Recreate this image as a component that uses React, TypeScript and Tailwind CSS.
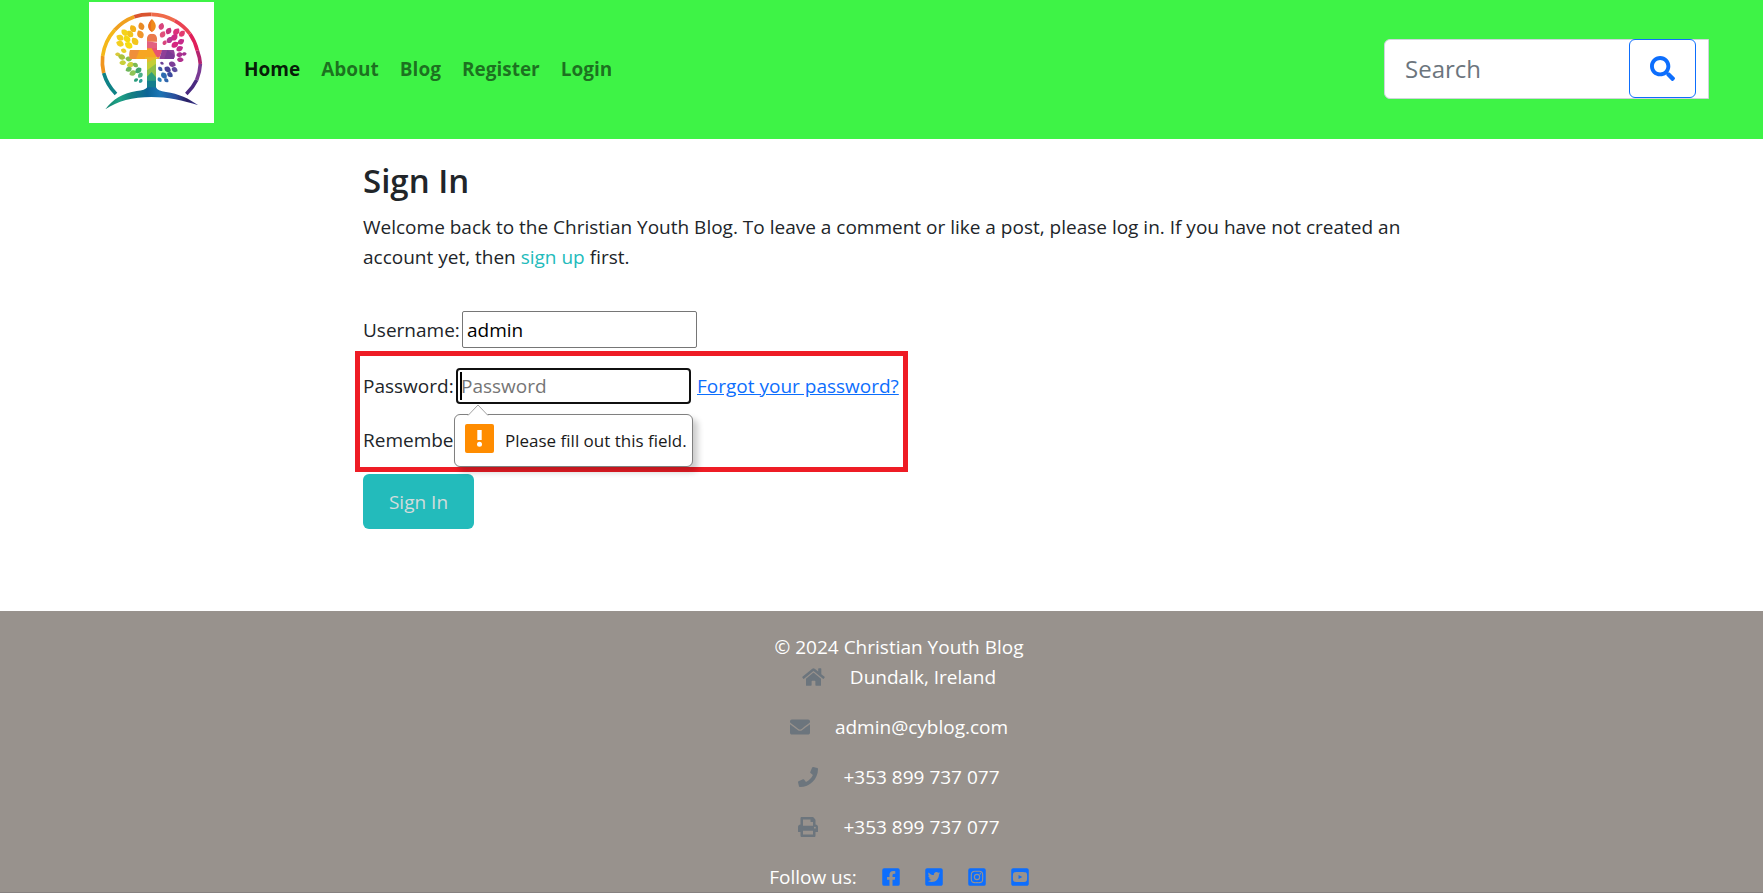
import {
  FaEnvelope,
  FaFacebookSquare,
  FaHome,
  FaInstagramSquare,
  FaPhone,
  FaPrint,
  FaSearch,
  FaTwitterSquare,
  FaYoutubeSquare,
} from "react-icons/fa";

type Leaf = [x: number, y: number, angle: number, size: number, color: string];

const leaves: Leaf[] = [
  [184, 79, -20, 12, "#e98a26"],
  [159, 86, -35, 12, "#f3b21b"],
  [181, 103, -30, 13, "#f0962a"],
  [150, 102, -45, 12, "#f2c51c"],
  [134, 98, -50, 12, "#f5d21a"],
  [120, 113, -60, 12, "#f3cf1e"],
  [141, 117, -50, 12, "#f6d90f"],
  [165, 124, -35, 13, "#f2c51c"],
  [120, 131, -70, 12, "#f4cf20"],
  [146, 136, -55, 13, "#f6dc12"],
  [131, 152, -65, 9, "#e9cf2a"],
  [113, 163, -85, 8, "#d9c93a"],
  [125, 171, -75, 11, "#a9c23f"],
  [128, 188, -95, 10, "#c9cf3a"],
  [146, 177, -80, 10, "#8bbf4d"],
  [151, 194, -110, 11, "#cdd23c"],
  [146, 208, -115, 10, "#6fb65a"],
  [166, 195, -60, 9, "#7dba50"],
  [158, 219, -120, 11, "#8fc455"],
  [175, 211, -130, 11, "#3fa56b"],
  [181, 226, -140, 9, "#4bb08a"],
  [168, 240, -120, 7, "#2a9d7c"],
  [182, 243, -140, 7, "#2f9e9a"],
  [244, 79, 20, 11, "#d8447c"],
  [266, 93, 30, 11, "#c9307c"],
  [248, 103, 30, 11, "#e0507a"],
  [289, 95, 40, 12, "#dd2f7a"],
  [306, 101, 45, 11, "#e23a6e"],
  [283, 112, 45, 12, "#cf2a86"],
  [269, 120, 40, 11, "#b93692"],
  [303, 125, 55, 11, "#c7298a"],
  [285, 134, 55, 12, "#d6247f"],
  [254, 128, 35, 8, "#d8447c"],
  [299, 146, 65, 11, "#c32a8c"],
  [313, 162, 85, 7, "#a32f8f"],
  [299, 164, 80, 10, "#a8308f"],
  [301, 179, 95, 10, "#b0308d"],
  [277, 193, 110, 11, "#7c3d97"],
  [284, 209, 120, 10, "#5d4a9d"],
  [263, 208, 125, 11, "#4b3f96"],
  [246, 190, 120, 6, "#6a3f95"],
  [241, 207, 135, 8, "#3e5aa6"],
  [270, 224, 130, 10, "#3b4a9e"],
  [252, 227, 140, 11, "#2d6bb0"],
  [239, 239, 145, 8, "#2a7fb8"],
  [259, 241, 130, 8, "#2f66ad"],
];

const arcs = [
  { d: "M108 282A147 147 0 0 1 71 219", color: "#0f8286" },
  { d: "M71 219A147 147 0 0 1 68 168", color: "#f0951f" },
  { d: "M68 168A147 147 0 0 1 104 90", color: "#f4b71a" },
  { d: "M104 90A147 147 0 0 1 163 50", color: "#f0a01f" },
  { d: "M163 50A147 147 0 0 1 214 43", color: "#d9532f" },
  { d: "M214 43A147 147 0 0 1 284 62", color: "#ef6a4a" },
  { d: "M284 62A147 147 0 0 1 330 102", color: "#ea4253" },
  { d: "M330 102A147 147 0 0 1 352 152", color: "#e01f5a" },
  { d: "M352 152A147 147 0 0 1 361 192", color: "#b3246f" },
  { d: "M361 192A147 147 0 0 1 350 240", color: "#7a3a94" },
  { d: "M350 240A147 147 0 0 1 319 282", color: "#4a2a80" },
];

function Logo() {
  return (
    <svg viewBox="27 6 375 363" className="block h-[121px] w-[125px]" role="img" aria-label="Christian Youth Blog logo">
      <defs>
        <linearGradient id="hill" x1="76" x2="355" y1="0" y2="0" gradientUnits="userSpaceOnUse">
          <stop offset="0" stopColor="#12806f" />
          <stop offset="0.15" stopColor="#1fa386" />
          <stop offset="0.28" stopColor="#147f80" />
          <stop offset="0.45" stopColor="#0c6496" />
          <stop offset="0.58" stopColor="#1b75b4" />
          <stop offset="0.75" stopColor="#2a4f9c" />
          <stop offset="0.88" stopColor="#2b1f63" />
          <stop offset="1" stopColor="#3c3f98" />
        </linearGradient>
        <clipPath id="cross">
          <path d="M201 280V177H150Q145 163 150 150H201V114Q203 101 216 101Q229 101 231 114V150H281Q288 163 281 177H228V280Z" />
        </clipPath>
      </defs>
      <path fill="#fff" d="M27 6h375v363H27z" />
      <g fill="none" strokeWidth="11">
        {arcs.map((arc) => (
          <path key={arc.d} d={arc.d} stroke={arc.color} />
        ))}
      </g>
      {leaves.map(([x, y, angle, size, color]) => (
        <path
          key={`${x}-${y}`}
          d="M0-1C.95-.5 1 .6 0 1C-1 .6-.95-.5 0-1Z"
          fill={color}
          transform={`translate(${x} ${y}) rotate(${angle}) scale(${size})`}
        />
      ))}
      <path d="M216 57C230 70 232 86 216 96C200 86 202 70 216 57Z" fill="#f08a1c" />
      <path d="M216 57C212 70 212 86 216 96C200 86 202 70 216 57Z" fill="#e9701f" />
      <g clipPath="url(#cross)">
        <path fill="#ea7a4c" d="M195 95h45v30h-45z" />
        <path fill="#e3607f" d="M195 122l45 8v30h-45z" />
        <path fill="#ef8f3a" d="M140 145h40v40h-40z" />
        <path fill="#f6a623" d="M180 145h35l20 20-20 20h-50z" />
        <path fill="#e8536f" d="M215 145h35l-15 35z" />
        <path fill="#8e3f98" d="M248 145h45v40h-58z" />
        <path fill="#7a3a94" d="M262 150l28 20v15h-40z" />
        <path fill="#e9b92a" d="M195 172h45l-20 20h-25z" />
        <path fill="#c4cf36" d="M195 190l35-15v45h-35z" />
        <path fill="#8dc04a" d="M195 215l35-25v50h-35z" />
        <path fill="#2f9e7c" d="M195 236l20-20 20 24v12h-40z" />
        <path fill="#147d8e" d="M195 242h40v40h-40z" />
      </g>
      <path
        fill="url(#hill)"
        d="M76 328C98 297 130 279 170 273Q196 271 202 262H228Q232 273 258 276C295 281 328 296 355 316C310 301 262 291 214 291C158 291 112 303 76 328Z"
      />
    </svg>
  );
}

const navLinks = ["Home", "About", "Blog", "Register", "Login"];

const contacts = [
  { Icon: FaHome, size: "h-5 w-[23px]", text: "Dundalk, Ireland" },
  { Icon: FaEnvelope, size: "size-5", text: "admin@cyblog.com" },
  { Icon: FaPhone, size: "size-5", text: "+353 899 737 077" },
  { Icon: FaPrint, size: "size-5", text: "+353 899 737 077" },
];

const socials = [
  { Icon: FaFacebookSquare, name: "Facebook" },
  { Icon: FaTwitterSquare, name: "Twitter" },
  { Icon: FaInstagramSquare, name: "Instagram" },
  { Icon: FaYoutubeSquare, name: "YouTube" },
];

function Header() {
  return (
    <header className="flex min-h-[139px] items-center bg-[#3ef346] pr-[54px] pb-px pl-[89px]">
      <a href="#home" className="mt-[2px] self-start">
        <Logo />
      </a>
      <nav className="ml-[30px] flex gap-[21px] font-bold">
        {navLinks.map((link) => (
          <a
            key={link}
            href={`#${link.toLowerCase()}`}
            className={link === "Home" ? "text-black/90" : "text-black/55"}
          >
            {link}
          </a>
        ))}
      </nav>
      <form
        role="search"
        className="ml-auto flex h-[60px] w-[325px] rounded-l-md border border-[#ced4da] bg-white"
      >
        <input
          type="search"
          aria-label="Search"
          placeholder="Search"
          className="min-w-0 flex-1 bg-transparent pl-5 text-2xl outline-none placeholder:text-[#6c757d]"
        />
        <button
          type="button"
          aria-label="Submit search"
          className="-mt-px mr-3 flex h-[59px] w-[67px] items-center justify-center rounded-md border border-[#0d6efd] text-[#0d6efd]"
        >
          <FaSearch className="size-[25px]" />
        </button>
      </form>
    </header>
  );
}

function ValidationMessage() {
  return (
    <div
      role="alert"
      className="absolute top-full -left-[2px] z-10 mt-[10px] flex h-[53px] w-[239px] items-center gap-[11px] rounded-md border border-[#808080] bg-white pl-[10px] text-[17px] text-[#1a1a1a] shadow-[5px_5px_6px_rgba(0,0,0,0.2)]"
    >
      <svg viewBox="0 0 22 12" className="absolute -top-[11px] left-3 h-3 w-[22px]" aria-hidden="true">
        <path d="M0 12L11 1L22 12Z" fill="#fff" />
        <path d="M1 11.5L11 1L21 11.5" fill="none" stroke="#a0a0a0" />
      </svg>
      <svg viewBox="0 0 29 29" className="-mt-1 size-[29px]" aria-hidden="true">
        <rect width="29" height="29" rx="2" fill="#ff8c00" />
        <path d="M12.3 6h4.4v10h-4.4z" fill="#fff" />
        <circle cx="14.5" cy="20.3" r="2.5" fill="#fff" />
      </svg>
      <span>Please fill out this field.</span>
    </div>
  );
}

function SignIn() {
  return (
    <main className="pt-[21px] pb-[82px] pl-[35px]">
      <div className="mx-auto max-w-[1072px]">
        <h1 className="mb-[10px] text-[33px] leading-[42px] font-semibold">Sign In</h1>
        <p>
          Welcome back to the Christian Youth Blog. To leave a comment or like a post, please log in. If you have not
          created an account yet, then{" "}
          <a href="#register" className="text-[#23bbbb]">
            sign up
          </a>{" "}
          first.
        </p>
        <form className="mt-[39px]" noValidate>
          <div className="flex items-center">
            <label htmlFor="username" className="w-[99px]">
              Username:
            </label>
            <input
              id="username"
              type="text"
              defaultValue="admin"
              className="h-[37px] w-[235px] rounded-xs border border-[#767676] px-1 text-black outline-none"
            />
          </div>
          <div className="mt-[3px] -ml-2 w-fit border-5 border-[#ee1c25] py-3 pr-1 pl-[3px]">
            <div className="flex items-center">
              <label htmlFor="password" className="w-[93px]">
                Password:
              </label>
              <div className="relative mr-[6px]">
                <input
                  id="password"
                  type="password"
                  placeholder="Password"
                  required
                  className="block h-9 w-[235px] rounded-sm border-2 border-[#101010] px-[3px] caret-transparent outline-none placeholder:text-[#757575]"
                />
                <span className="absolute top-1 left-1 h-7 w-[2px] bg-black" />
                <ValidationMessage />
              </div>
              <a href="#reset" className="text-[#0d6efd] underline">
                Forgot your password?
              </a>
            </div>
            <div className="mt-[21px] flex items-center gap-[6px]">
              <label htmlFor="remember">Remember Me:</label>
              <input id="remember" type="checkbox" className="size-4" />
            </div>
          </div>
          <button
            type="submit"
            className="mt-[2px] h-[55px] w-[111px] rounded-md bg-[#23bbbb] text-[#d3dcdc]"
          >
            Sign In
          </button>
        </form>
      </div>
    </main>
  );
}

function Footer() {
  return (
    <footer className="border-b border-[#868180] bg-[#98928d] pt-[21px] pl-[35px] text-white">
      <p className="text-center">© 2024 Christian Youth Blog</p>
      <ul className="flex flex-col gap-5">
        {contacts.map(({ Icon, size, text }, index) => (
          <li key={index} className="flex items-center justify-center gap-[25px]">
            <Icon className={`${size} text-[#6c757d]`} />
            {text}
          </li>
        ))}
        <li className="flex items-center justify-center gap-[25px]">
          Follow us:
          {socials.map(({ Icon, name }) => (
            <a key={name} href={`#${name.toLowerCase()}`} aria-label={name} className="text-[#0d6efd]">
              <Icon className="h-5 w-[18px]" />
            </a>
          ))}
        </li>
      </ul>
    </footer>
  );
}

export default function App() {
  return (
    <div className="bg-white font-['Open_Sans','Noto_Sans',sans-serif] text-[19px] leading-[30px] text-[#212529]">
      <Header />
      <SignIn />
      <Footer />
    </div>
  );
}
